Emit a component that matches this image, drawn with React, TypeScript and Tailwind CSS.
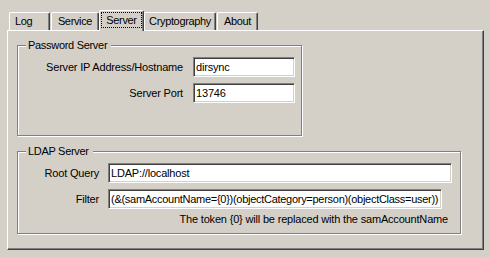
import React from "react";

const tabBase =
  "flex items-center border-l border-t border-l-white border-t-white border-r border-r-[#404040] shadow-[inset_-1px_0_0_#808080] rounded-t-[2px] bg-[#d4d0c8] tracking-[-0.35px]";

function Field({ value, className }: { value: string; className: string }) {
  return (
    <div
      className={
        "flex items-center h-[20px] bg-white border border-t-[#808080] border-l-[#808080] border-r-white border-b-white shadow-[inset_1px_1px_0_#404040,inset_-1px_-1px_0_#d4d0c8] pl-[2px] whitespace-nowrap overflow-hidden " +
        className
      }
    >
      {value}
    </div>
  );
}

export default function App() {
  return (
    <div className="w-[490px] h-[257px] bg-[#d4d0c8] pt-[10px] pl-[7px] font-['Liberation_Sans',Arial,sans-serif] text-[11px] leading-[13px] tracking-[-0.18px] text-black select-none">
      {/* Tabs */}
      <div className="flex items-end h-[20px] pl-[2px]">
        <div className={tabBase + " w-[41px] h-[18px] mr-[1px] justify-start pl-[5px]"}>Log</div>
        <div className={tabBase + " w-[48px] h-[18px] justify-center"}>Service</div>
        <div className={tabBase + " relative z-10 w-[45px] h-[21px] -mb-[1px] flex-col items-stretch"}>
          <div className="mt-[1px] ml-[1px] mr-[1px] h-[16px] border border-dotted border-black flex items-center justify-center">
            Server
          </div>
        </div>
        <div className={tabBase + " w-[72px] h-[18px] mr-[1px] justify-center"}>Cryptography</div>
        <div className={tabBase + " w-[41px] h-[18px] justify-center"}>About</div>
      </div>

      {/* Panel */}
      <div className="w-[477px] h-[220px] border border-t-white border-l-white border-r-[#404040] border-b-[#404040] shadow-[inset_-1px_-1px_0_#808080]">
        {/* Password Server group */}
        <div className="relative ml-[9px] mt-[14px] w-[285px] h-[91px] border border-[#808080] shadow-[1px_1px_0_#ffffff,inset_1px_1px_0_#ffffff] pt-[11px]">
          <span className="absolute left-[8px] -top-[7px] pl-[2px] pr-[4px] bg-[#d4d0c8] tracking-[-0.3px]">Password Server</span>
          <div className="flex items-center">
            <div className="w-[165px] text-right">Server IP Address/Hostname</div>
            <Field value="dirsync" className="ml-[10px] w-[102px]" />
          </div>
          <div className="flex items-center mt-[6px]">
            <div className="w-[165px] text-right">Server Port</div>
            <Field value="13746" className="ml-[10px] w-[102px]" />
          </div>
        </div>

        {/* LDAP Server group */}
        <div className="relative ml-[9px] mt-[15px] w-[444px] h-[83px] border border-[#808080] shadow-[1px_1px_0_#ffffff,inset_1px_1px_0_#ffffff] pt-[11px]">
          <span className="absolute left-[8px] -top-[7px] pl-[2px] pr-[4px] bg-[#d4d0c8] tracking-[-0.3px]">LDAP Server</span>
          <div className="flex items-center">
            <div className="w-[81px] text-right">Root Query</div>
            <Field value="LDAP://localhost" className="ml-[9px] w-[344px]" />
          </div>
          <div className="flex items-center mt-[6px]">
            <div className="w-[81px] text-right">Filter</div>
            <Field
              value="(&(samAccountName={0})(objectCategory=person)(objectClass=user))"
              className="ml-[9px] w-[334px] tracking-[-0.28px]"
            />
          </div>
          <div className="mt-[4px] text-right pr-[12px]">
            The token {"{0}"} will be replaced with the samAccountName
          </div>
        </div>
      </div>
    </div>
  );
}
